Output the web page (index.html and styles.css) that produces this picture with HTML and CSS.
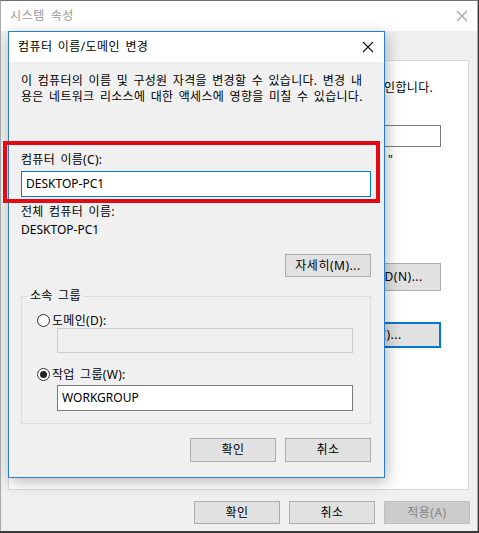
FILE: index.html
```html
<!DOCTYPE html>
<html lang="ko">
<head>
<meta charset="utf-8">
<title>컴퓨터 이름/도메인 변경</title>
<link rel="stylesheet" href="styles.css">
</head>
<body>
<div class="window">
  <div class="win-title">
    <span class="win-title-text">시스템 속성</span>
    <svg class="xicon xicon-outer" width="12" height="12" viewBox="0 0 12 12"><path d="M1 1L11 11M11 1L1 11" /></svg>
  </div>
  <div class="win-body">
    <div class="tab-panel">
      <p class="bg-text">Windows는 다음 정보를 사용하여 네트워크에서 이 컴퓨터를 확인합니다.</p>
      <div class="bg-input"></div>
      <p class="bg-quote">"</p>
      <button class="btn bg-btn">네트워크 ID(N)...</button>
      <button class="btn bg-btn bg-btn-default">변경(C)...</button>
    </div>
    <div class="win-buttons">
      <button class="btn wbtn">확인</button>
      <button class="btn wbtn">취소</button>
      <button class="btn wbtn disabled">적용(A)</button>
    </div>
  </div>
</div>

<div class="dialog">
  <div class="dlg-title">
    <span class="dlg-title-text">컴퓨터 이름/도메인 변경</span>
    <svg class="xicon xicon-dlg" width="12" height="12" viewBox="0 0 12 12"><path d="M1 1L11 11M11 1L1 11" /></svg>
  </div>
  <div class="dlg-body">
    <p class="desc"><span class="desc-line">이 컴퓨터의 이름 및 구성원 자격을 변경할 수 있습니다. 변경 내</span><span class="desc-line">용은 네트워크 리소스에 대한 액세스에 영향을 미칠 수 있습니다.</span></p>
    <p class="field-label ko">컴퓨터 이름(C):</p>
    <div class="textbox focused">DESKTOP-PC1</div>
    <p class="full-label ko">전체 컴퓨터 이름:</p>
    <p class="full-value">DESKTOP-PC1</p>
    <button class="btn more-btn">자세히(M)...</button>
    <fieldset class="group">
      <legend class="group-legend ko">소속 그룹</legend>
      <div class="radio-row first">
        <span class="radio"></span><span class="radio-label ko">도메인(D):</span>
      </div>
      <div class="textbox group-box disabled-box"></div>
      <div class="radio-row second">
        <span class="radio checked"></span><span class="radio-label ko">작업 그룹(W):</span>
      </div>
      <div class="textbox group-box last">WORKGROUP</div>
    </fieldset>
    <div class="dlg-buttons">
      <button class="btn dbtn">확인</button>
      <button class="btn dbtn">취소</button>
    </div>
  </div>
</div>

<div class="annotation"></div>
</body>
</html>
```

FILE: styles.css
```css
* { box-sizing: border-box; }

html, body {
  margin: 0;
  padding: 0;
}

body {
  width: 479px;
  height: 533px;
  background: #3a3a3a;
  font-family: "Noto Sans", "Noto Sans CJK KR", sans-serif;
  font-size: 12px;
  color: #000;
  position: relative;
  overflow: hidden;
}

p { margin: 0; }

.ko {
  letter-spacing: 0.3px;
  word-spacing: 2px;
}

.window {
  width: 478px;
  height: 531px;
  background: #f0f0f0;
  border-top: 1px solid #707070;
  border-left: 1px solid #a8a8a8;
  border-right: 1px solid #a8a8a8;
  display: flex;
  flex-direction: column;
}

.win-title {
  height: 30px;
  background: #fff;
  display: flex;
  align-items: center;
  justify-content: space-between;
  padding: 0 9px 0 9px;
}

.win-title-text {
  color: #999;
  font-size: 12px;
  line-height: 16px;
  letter-spacing: 0.6px;
  word-spacing: 2px;
}

.xicon path {
  fill: none;
  stroke-width: 1.1;
}

.xicon-outer path { stroke: #a0a0a0; }
.xicon-dlg path { stroke: #111; }

.win-body {
  flex: 1;
  display: flex;
  flex-direction: column;
  padding: 29px 0 0 7px;
}

.tab-panel {
  width: 461px;
  height: 430px;
  background: #fff;
  border: 1px solid #d9d9d9;
  display: flex;
  flex-direction: column;
  align-items: flex-end;
  padding-right: 27px;
}

.bg-text {
  margin-top: 19px;
  line-height: 16px;
  white-space: nowrap;
  margin-right: 8px;
  letter-spacing: 0.3px;
}

.bg-input {
  margin-top: 29px;
  width: 200px;
  height: 22px;
  border: 1px solid #7a7a7a;
  background: #fff;
}

.bg-quote {
  margin-top: 5px;
  line-height: 16px;
  margin-right: 48px;
}

.btn {
  font-family: inherit;
  font-size: 12px;
  color: #000;
  background: #e1e1e1;
  border: 1px solid #adadad;
  padding: 0;
  margin: 0;
  line-height: 16px;
  letter-spacing: 0.5px;
}

.bg-btn {
  width: 129px;
  height: 28px;
}

.tab-panel .bg-btn:first-of-type { margin-top: 95px; }

.bg-btn-default {
  margin-top: 31px;
  height: 26px;
  border: 2px solid #0078d7;
}

.win-buttons {
  margin-top: 11px;
  display: flex;
  justify-content: flex-end;
  gap: 9px;
  padding-right: 7px;
}

.wbtn {
  width: 86px;
  height: 23px;
}

.wbtn.disabled {
  background: #cccccc;
  border-color: #bfbfbf;
  color: #838383;
}

/* Dialog overlay */
.dialog {
  position: absolute;
  left: 8px;
  top: 31px;
  width: 377px;
  height: 447px;
  background: #f0f0f0;
  border: 1px solid #2a7ccc;
  box-shadow: 2px 4px 14px rgba(0, 0, 0, 0.28);
  display: flex;
  flex-direction: column;
}

.dlg-title {
  height: 30px;
  background: #fff;
  display: flex;
  align-items: center;
  justify-content: space-between;
  padding: 0 10px 0 9px;
  flex: none;
}

.dlg-title-text {
  font-size: 12px;
  line-height: 16px;
  letter-spacing: 0.4px;
  word-spacing: 2px;
}

.dlg-body {
  flex: 1;
  display: flex;
  flex-direction: column;
  padding: 0 13px 0 12px;
}

.desc {
  margin-top: 11px;
  display: flex;
  flex-direction: column;
  white-space: nowrap;
  letter-spacing: 0.3px;
  word-spacing: 2px;
}

.desc-line {
  display: block;
  height: 16px;
  line-height: 16px;
}

.field-label {
  margin-top: 47px;
  line-height: 16px;
}

.textbox {
  height: 26px;
  background: #fff;
  border: 1px solid #7a7a7a;
  padding: 0 4px;
  line-height: 24px;
  white-space: nowrap;
}

.textbox.focused {
  margin-top: 3px;
  border-color: #0078d7;
}

.full-label {
  margin-top: 6px;
  line-height: 18px;
}

.full-value {
  line-height: 18px;
}

.more-btn {
  margin-top: 15px;
  align-self: flex-end;
  width: 86px;
  height: 23px;
}

.group {
  margin: 11px 0 0 0;
  padding: 0 17px 12px 0;
  border: 1px solid #dcdcdc;
  min-width: 0;
}

.group-legend {
  margin-left: 5px;
  padding: 0 3px;
  line-height: 16px;
}

.radio-row {
  display: flex;
  align-items: center;
  height: 16px;
  padding-left: 15px;
  gap: 2px;
}

.radio-row.first { margin-top: 8px; }
.radio-row.second { margin-top: 13px; }

.radio {
  width: 13px;
  height: 13px;
  border-radius: 50%;
  border: 1px solid #333;
  background: #fff;
  display: flex;
  align-items: center;
  justify-content: center;
  flex: none;
}

.radio.checked::after {
  content: "";
  width: 7px;
  height: 7px;
  border-radius: 50%;
  background: #222;
}

.group-box {
  margin-left: 35px;
}

.disabled-box {
  height: 25px;
  background: #f0f0f0;
  border-color: #cccccc;
}

.group-box.last {
  margin-top: 3px;
}

.dlg-buttons {
  margin-top: 14px;
  display: flex;
  justify-content: flex-end;
  gap: 9px;
}

.dbtn {
  width: 86px;
  height: 24px;
}

/* red highlight annotation drawn over the screenshot */
.annotation {
  position: absolute;
  left: 3px;
  top: 141px;
  width: 377px;
  height: 62px;
  border: 4px solid #e30b13;
}
```
